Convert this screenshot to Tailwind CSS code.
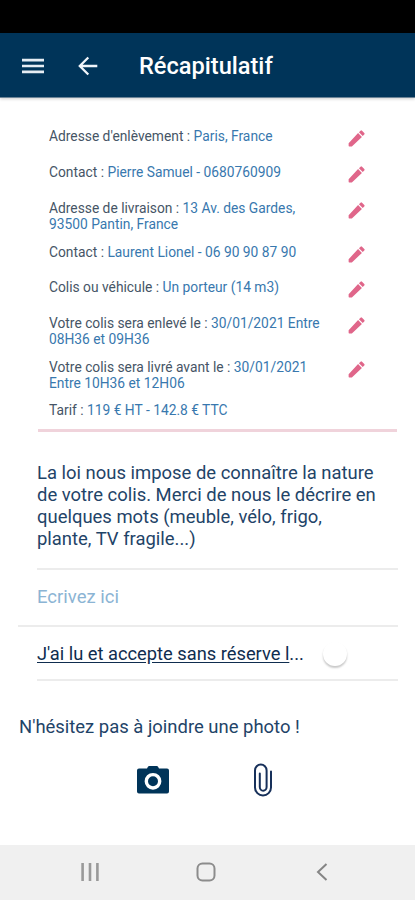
<!DOCTYPE html>
<html lang="fr">
<head>
  <meta charset="UTF-8" />
  <meta name="viewport" content="width=device-width, initial-scale=1.0"/>
  <title>Récapitulatif</title>
  <script src="https://cdn.jsdelivr.net/npm/@tailwindcss/browser@4"></script>
</head>
<body class="bg-white font-['Roboto',sans-serif] text-[#1f4468]">

  <svg class="hidden">
    <symbol id="pencil" viewBox="0 0 24 24">
      <path d="M3 17.3V20.300q0 .7.7.7H6.700L18.200 10.200l-4.400-4.400zM20.900 7.400a1.200 1.200 0 0 0 0-1.700l-2.600-2.600a1.200 1.200 0 0 0-1.700 0l-1.800 1.800 4.300 4.300z"/>
    </symbol>
  </svg>

  <div class="w-[415px] h-[900px] flex flex-col overflow-hidden">
    <!-- Status bar -->
    <div class="h-[33px] shrink-0 bg-black"></div>

    <!-- Header -->
    <header class="h-[65px] shrink-0 bg-[#003459] text-white flex items-center pt-px pl-[22px] border-b border-[#6c8497] shadow-[0_1px_3px_rgba(0,0,0,0.2)]">
      <svg class="w-[22px] h-4" viewBox="0 0 22 16" fill="#e6edf4"><path d="M0 .8h22v2.6H0zM0 6.7h22v2.6H0zM0 12.6h22v2.6H0z"/></svg>
      <svg class="w-5 h-5 ml-[34px]" viewBox="0 0 20 20" fill="none" stroke="#f0f5fa" stroke-width="2.3"><path d="M19.3 10H2.5M10.3 1.5 1.8 10l8.5 8.5"/></svg>
      <h1 class="ml-[41px] pt-px text-[23.6px] leading-7 font-medium">Récapitulatif</h1>
    </header>

    <main class="flex-1 flex flex-col">
      <!-- Summary -->
      <section class="ml-[38px] mr-[18px] pl-[11px] pt-[30px] h-[334px] border-b-[3px] border-[#f0d3db] text-[13.8px] leading-4 text-[#465566]">
        <div class="flex h-9"><p class="w-[290px]">Adresse d'enlèvement : <span class="text-[#3878ae]">Paris, France</span></p><svg class="w-[21px] h-[21px] ml-[7px] fill-[#e0668a]"><use href="#pencil"/></svg></div>
        <div class="flex h-9"><p class="w-[290px]">Contact : <span class="text-[#3878ae]">Pierre Samuel - 0680760909</span></p><svg class="w-[21px] h-[21px] ml-[7px] fill-[#e0668a]"><use href="#pencil"/></svg></div>
        <div class="flex h-11"><p class="w-[290px]">Adresse de livraison : <span class="text-[#3878ae]">13 Av. des Gardes,<br>93500 Pantin, France</span></p><svg class="w-[21px] h-[21px] ml-[7px] fill-[#e0668a]"><use href="#pencil"/></svg></div>
        <div class="flex h-[35px]"><p class="w-[290px]">Contact : <span class="text-[#3878ae]">Laurent Lionel - 06 90 90 87 90</span></p><svg class="w-[21px] h-[21px] ml-[7px] fill-[#e0668a]"><use href="#pencil"/></svg></div>
        <div class="flex h-9"><p class="w-[290px]">Colis ou véhicule : <span class="text-[#3878ae]">Un porteur (14 m3)</span></p><svg class="w-[21px] h-[21px] ml-[7px] fill-[#e0668a]"><use href="#pencil"/></svg></div>
        <div class="flex h-11"><p class="w-[290px]">Votre colis sera enlevé le : <span class="text-[#3878ae]">30/01/2021 Entre<br>08H36 et 09H36</span></p><svg class="w-[21px] h-[21px] ml-[7px] fill-[#e0668a]"><use href="#pencil"/></svg></div>
        <div class="flex h-[43px]"><p class="w-[290px]">Votre colis sera livré avant le : <span class="text-[#3878ae]">30/01/2021<br>Entre 10H36 et 12H06</span></p><svg class="w-[21px] h-[21px] ml-[7px] fill-[#e0668a]"><use href="#pencil"/></svg></div>
        <p>Tarif : <span class="text-[#3878ae]">119 € HT - 142.8 € TTC</span></p>
      </section>

      <!-- Description -->
      <p class="ml-[37px] pt-[30px] h-[136px] text-[18.45px] leading-[22px] whitespace-nowrap">La loi nous impose de connaître la nature<br>de votre colis. Merci de nous le décrire en<br>quelques mots (meuble, vélo, frigo,<br>plante, TV fragile...)</p>
      <div class="ml-[37px] mr-[17px] h-[2px] bg-[#ececec]"></div>
      <div class="h-[55px] pl-[37px] flex items-center text-[18.5px] text-[#8bb4d4]">Ecrivez ici</div>
      <div class="ml-[18px] mr-[17px] h-[2px] bg-[#ececec]"></div>
      <div class="h-[52px] pl-[37px] pt-px flex items-center text-[18.3px] text-[#0f2d4f]">
        <p class="w-[286px] whitespace-nowrap"><span class="underline underline-offset-2">J'ai lu et accepte sans réserve l</span>...</p>
        <div class="w-6 h-6 rounded-full bg-white shadow-[0_2px_2px_rgba(0,0,0,0.22)]"></div>
      </div>
      <div class="ml-[37px] mr-[17px] h-[2px] bg-[#ececec]"></div>

      <!-- Attachments -->
      <p class="ml-[19px] mt-[35px] text-[18.45px] leading-[22px]">N'hésitez pas à joindre une photo !</p>
      <div class="flex items-center h-9 mt-[24px] pl-[136px]">
        <svg class="w-[34px] h-[30px]" viewBox="0 0 34 30">
          <path fill="#003459" d="M3 3.500H11l.8-1.600Q12.300 1 13.300 1h7.400q1 0 1.500.9l.8 1.600h8q2 0 2 2V26.500q0 2-2 2H3q-2 0-2-2v-21q0-2 2-2z"/>
          <circle cx="17" cy="16.300" r="6.700" fill="#003459" stroke="#fff" stroke-width="3.400"/>
        </svg>
        <svg class="w-5 h-[34px] ml-[83px]" viewBox="0 0 20 34" fill="none" stroke="#17305a" stroke-width="2" stroke-linecap="round">
          <path d="M18 8.500V24.500a8 8 0 0 1-16 0V7.500a5.800 6 0 0 1 11.600 0v16.500a3.400 3.800 0 0 1-6.800 0V10.500"/>
        </svg>
      </div>
    </main>

    <!-- Navigation bar -->
    <nav class="h-[55px] shrink-0 bg-[#f0f0f0] flex items-start pt-[18px] pl-[81px]">
      <svg class="w-[18px] h-[18px]" viewBox="0 0 18 18" fill="#999"><path d="M.3 0h2.600v18H.3zM7.700 0h2.600v18H7.700zM15.100 0h2.600v18h-2.600z"/></svg>
      <svg class="w-5 h-5 ml-[97px] -mt-px" viewBox="0 0 20 20" fill="none" stroke="#8c8c8c" stroke-width="2"><rect x="1.500" y="1.500" width="17" height="17" rx="5"/></svg>
      <svg class="w-3 h-[18px] ml-[100px]" viewBox="0 0 12 18" fill="none" stroke="#858585" stroke-width="2"><path d="M10.500 1 2 9l8.500 8"/></svg>
    </nav>
  </div>

</body>
</html>
